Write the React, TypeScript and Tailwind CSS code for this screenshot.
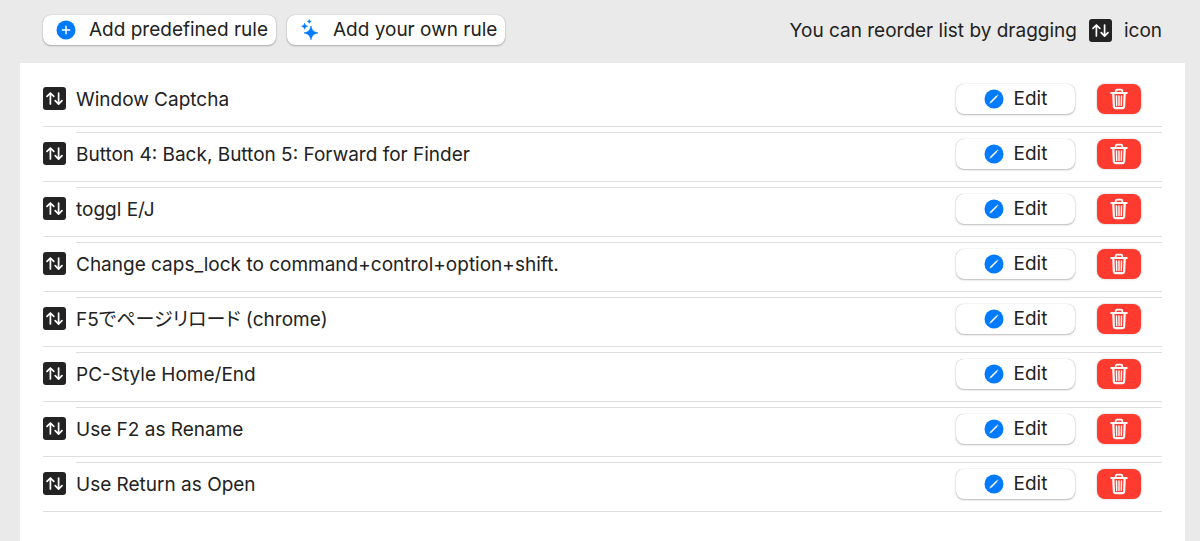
import { useState } from "react";

const initialRules = [
  "Window Captcha",
  "Button 4: Back, Button 5: Forward for Finder",
  "toggl E/J",
  "Change caps_lock to command+control+option+shift.",
  "F5でページリロード (chrome)",
  "PC-Style Home/End",
  "Use F2 as Rename",
  "Use Return as Open",
];

const ReorderIcon = () => (
  <svg viewBox="0 0 23 23" className="h-[23px] w-[23px] shrink-0" aria-hidden="true">
    <rect width="23" height="23" rx="3" fill="#232323" />
    <g fill="none" stroke="#fff" strokeWidth="1.7" strokeLinecap="round" strokeLinejoin="round">
      <path d="M7.400 17V6.200M4 9.400l3.400-3.400 3.400 3.400" />
      <path d="M15.600 6v11M12.200 13.700l3.400 3.400 3.400-3.400" />
    </g>
  </svg>
);

const PlusIcon = () => (
  <svg viewBox="0 0 20 20" className="h-5 w-5 shrink-0" aria-hidden="true">
    <circle cx="10" cy="10" r="9.5" fill="#007aff" />
    <path d="M10 6.3v7.4M6.3 10h7.4" stroke="#fff" strokeWidth="1.5" strokeLinecap="round" />
  </svg>
);

const SparklesIcon = () => (
  <svg viewBox="0 0 20 22" className="h-[22px] w-5 shrink-0" fill="#007aff" stroke="#007aff" strokeWidth="0.6" strokeLinejoin="round" aria-hidden="true">
    <path d="M11 7C12.300 11.800 13 12.600 18 13.900C13 15.200 12.300 16 11 20.800C9.700 16 9 15.200 4 13.900C9 12.600 9.700 11.800 11 7Z" />
    <path d="M4.600 4.200C5.200 6.200 5.600 6.600 7.600 7.200C5.600 7.800 5.200 8.200 4.600 10.200C4 8.200 3.600 7.800 1.600 7.200C3.600 6.600 4 6.200 4.600 4.200Z" />
    <path d="M9.300 0.500C9.700 1.800 9.900 2 11.200 2.400C9.900 2.800 9.700 3 9.300 4.300C8.900 3 8.700 2.800 7.400 2.400C8.700 2 8.900 1.800 9.300 0.500Z" />
  </svg>
);

const EditIcon = () => (
  <svg viewBox="0 0 20 20" className="h-5 w-5 shrink-0" aria-hidden="true">
    <circle cx="10" cy="10" r="9.5" fill="#007aff" />
    <path d="M6.6 13.4L13 7" stroke="#fff" strokeWidth="1.5" />
    <path d="M5.4 14.6l.6-1.7 1.1 1.1zM13.5 5.5l1 1-.6.6-1-1z" fill="#fff" />
  </svg>
);

const TrashIcon = () => (
  <svg viewBox="0 0 18 22" className="h-[22px] w-[18px]" fill="none" stroke="#fff" strokeLinecap="round" strokeLinejoin="round" aria-hidden="true">
    <path d="M1.2 5h15.6" strokeWidth="1.9" />
    <path d="M5.7 4.600V3c0-.8.5-1.300 1.300-1.300h4c.8 0 1.300.5 1.300 1.300v1.600" strokeWidth="1.700" />
    <path d="M3.300 5.500l.6 13.200c.1 1 .6 1.500 1.500 1.500h7.200c.9 0 1.400-.5 1.500-1.500l.6-13.200" strokeWidth="2.200" />
    <path d="M6.500 8l.2 9.500M9 8v9.500M11.500 8l-.2 9.500" strokeWidth="1.400" />
  </svg>
);

const buttonStyle =
  "flex items-center rounded-lg bg-white shadow-[0_0_1px_rgba(0,0,0,0.3),0_1px_2px_rgba(0,0,0,0.25)] active:bg-gray-100";

const App = () => {
  const [rules, setRules] = useState(initialRules);
  const [dragged, setDragged] = useState<number | null>(null);

  const removeRule = (index: number) => {
    setRules((prev) => prev.filter((_, i) => i !== index));
  };

  const moveRule = (target: number) => {
    if (dragged === null) return;
    const next = [...rules];
    const [rule] = next.splice(dragged, 1);
    next.splice(target, 0, rule);
    setRules(next);
    setDragged(null);
  };

  return (
    <div className="flex min-h-screen flex-col bg-[#eaeaea] pr-[15px] pl-5 font-['Inter','Noto_Sans_CJK_JP',sans-serif] text-[19px] leading-6 text-[#222222] [font-feature-settings:'palt']">
      <header className="flex items-center justify-between pt-[15px] pr-[23px] pb-[18px] pl-[23px]">
        <div className="flex gap-[11px]">
          <button type="button" className={`${buttonStyle} h-[30px] gap-[13px] pr-2 pl-[13px]`}>
            <PlusIcon />
            Add predefined rule
          </button>
          <button type="button" className={`${buttonStyle} h-[30px] gap-[13px] pr-2 pl-[13px]`}>
            <SparklesIcon />
            Add your own rule
          </button>
        </div>
        <p className="flex items-center gap-3">
          <span className="pt-0.5">You can reorder list by dragging</span>
          <ReorderIcon />
          <span className="pt-0.5">icon</span>
        </p>
      </header>

      <main className="flex-1 bg-white pt-[14px] pr-[23px] pb-7 pl-[23px]">
        <ul className="flex flex-col gap-[5px]">
          {rules.map((rule, index) => (
            <li
              key={rule}
              className="group flex gap-[10px] border-b border-[#dedede]"
              onDragOver={(e) => e.preventDefault()}
              onDrop={() => moveRule(index)}
            >
              <span draggable className="cursor-grab pt-[10px]" onDragStart={() => setDragged(index)}>
                <ReorderIcon />
              </span>
              <div className="flex flex-1 items-center border-t border-[#dedede] pt-[6px] pr-[21px] pb-3 group-first:border-transparent">
                <span className="flex-1 pt-0.5">{rule}</span>
                <button type="button" className={`${buttonStyle} mr-[22px] h-[30px] w-[119px] justify-center gap-[10px]`}>
                  <EditIcon />
                  Edit
                </button>
                <button
                  type="button"
                  aria-label={`Delete ${rule}`}
                  className="flex h-[30px] w-11 items-center justify-center rounded-lg bg-[#ff3b30] shadow-[0_0_2px_rgba(0,0,0,0.3)] active:bg-red-600"
                  onClick={() => removeRule(index)}
                >
                  <TrashIcon />
                </button>
              </div>
            </li>
          ))}
        </ul>
      </main>
    </div>
  );
};

export default App;
